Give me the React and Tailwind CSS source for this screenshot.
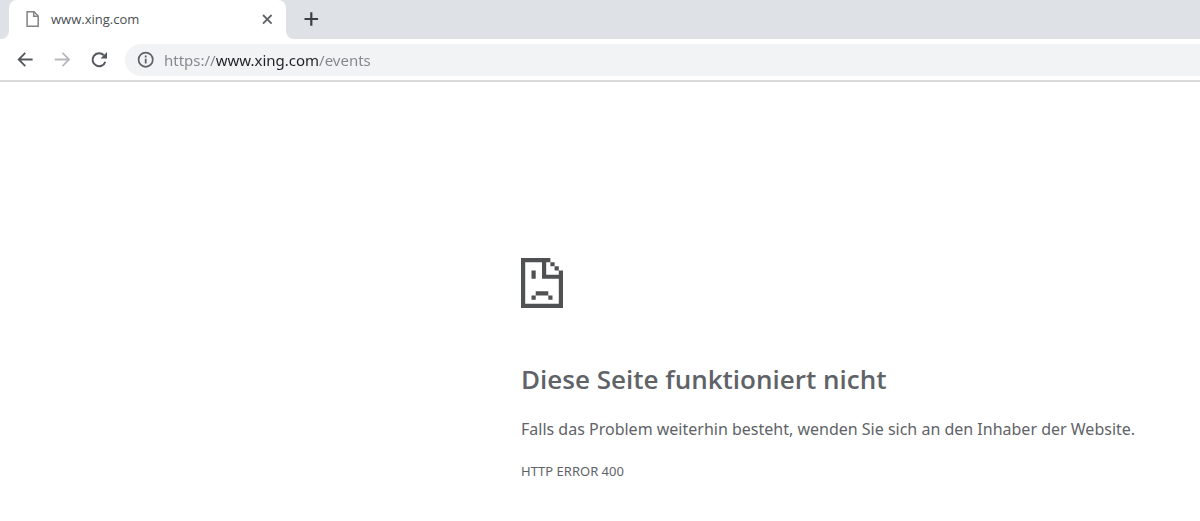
import React from "react";

function PageIcon() {
  return (
    <svg className="size-4 shrink-0" viewBox="0 0 16 16" fill="none" stroke="#838383" strokeWidth="1.5" aria-hidden="true">
      <path d="M2.1 .8H9L13.2 5V15.2H2.1Z" />
      <path d="M8.7 .9V5.2H13.2" />
    </svg>
  );
}

function Tab() {
  return (
    <div className="bg-[#dee1e6]">
      <div className="flex h-full w-[277px] items-center rounded-t-lg bg-white pr-[11px] pb-px pl-4">
        <PageIcon />
        <span className="ml-[10px] flex-1 text-[13px] leading-5 text-[#4b4e52]">www.xing.com</span>
        <button type="button" aria-label="Tab schließen" className="flex size-4 items-center justify-center">
          <svg className="size-4" viewBox="0 0 16 16" fill="none" stroke="#5f6368" strokeWidth="1.8" aria-hidden="true">
            <path d="M4 4L12.6 12.6M12.6 4L4 12.6" />
          </svg>
        </button>
      </div>
    </div>
  );
}

function TabStrip() {
  return (
    <div className="flex h-[39px] bg-white">
      <div className="w-[9px] rounded-br-lg bg-[#dee1e6]" />
      <Tab />
      <div className="flex flex-1 items-center rounded-bl-lg bg-[#dee1e6] pb-px pl-4">
        <button type="button" aria-label="Neuer Tab" className="flex size-[18px] items-center justify-center">
          <svg className="size-[18px]" viewBox="0 0 18 18" fill="none" stroke="#3c4043" strokeWidth="2.2" aria-hidden="true">
            <path d="M9.3 2.2V15.8M2.5 9H16.1" />
          </svg>
        </button>
      </div>
    </div>
  );
}

function Toolbar() {
  return (
    <div className="flex h-[43px] items-center border-b-2 border-[#d8d9db] bg-white pl-4">
      <button type="button" aria-label="Zurück" className="size-[18px]">
        <svg className="size-[18px]" viewBox="0 0 18 18" fill="none" stroke="#54585d" strokeWidth="1.8" aria-hidden="true">
          <path d="M16.6 8.5H3M9.3 1.9L2.7 8.5L9.3 15.1" />
        </svg>
      </button>
      <button type="button" aria-label="Vorwärts" disabled className="ml-5 size-[18px]">
        <svg className="size-[18px]" viewBox="0 0 18 18" fill="none" stroke="#b7b9bc" strokeWidth="1.8" aria-hidden="true">
          <path d="M.8 8.5H14.6M8.5 1.9L15.1 8.5L8.5 15.1" />
        </svg>
      </button>
      <button type="button" aria-label="Neu laden" className="ml-[18px] size-[18px]">
        <svg className="size-[18px]" viewBox="0 0 18 18" fill="none" aria-hidden="true">
          <path d="M15.3 10.7A6.5 6.5 0 1 1 13.8 4.2" stroke="#54585d" strokeWidth="2" />
          <path d="M17 1V7.5H10.5Z" fill="#54585d" />
        </svg>
      </button>
      <label className="ml-[17px] flex h-8 flex-1 items-center rounded-l-full bg-[#f1f3f4] pl-3">
        <svg className="size-[18px] shrink-0" viewBox="0 0 18 18" fill="none" aria-hidden="true">
          <circle cx="8.7" cy="8.7" r="7.1" stroke="#5f6368" strokeWidth="1.7" />
          <path d="M8.7 7.8V12.6M8.7 4.6V6.5" stroke="#5f6368" strokeWidth="1.8" />
        </svg>
        <input
          type="text"
          aria-label="Adresse"
          defaultValue="https://www.xing.com/events"
          className="ml-[9px] h-8 min-w-0 flex-1 bg-[linear-gradient(to_right,#80868b_52px,#202124_52px,#202124_154px,#80868b_154px)] bg-clip-text font-['Noto_Sans',sans-serif] text-[15px] text-transparent outline-none"
        />
      </label>
    </div>
  );
}

function SadPage() {
  return (
    <svg className="h-[50px] w-[42px]" viewBox="0 0 10 12" preserveAspectRatio="none" fill="#505153" aria-hidden="true">
      <path d="M0 0H7V1H1V11H9V5H5V1H6V4H9V3H10V12H0Z" />
      <path d="M7 1H8V2H7ZM8 2H9V3H8ZM2.5 3H3.5V5H2.5ZM3.5 8H6.5V9H3.5ZM2.5 9H3.5V10H2.5ZM6.5 9H7.5V10H6.5Z" />
    </svg>
  );
}

export default function App() {
  return (
    <div className="min-h-screen bg-white font-['Open_Sans','Noto_Sans',sans-serif]">
      <header>
        <TabStrip />
        <Toolbar />
      </header>
      <main className="ml-[521px] pt-44 font-['Noto_Sans',sans-serif] text-[#5f6368]">
        <SadPage />
        <h1 className="mt-[51px] font-['Open_Sans',sans-serif] text-[26px] leading-10 font-semibold">
          Diese Seite funktioniert nicht
        </h1>
        <p className="mt-4 text-base leading-7">
          Falls das Problem weiterhin besteht, wenden Sie sich an den Inhaber der Website.
        </p>
        <p className="mt-4 text-[13px] leading-6">HTTP ERROR 400</p>
      </main>
    </div>
  );
}
